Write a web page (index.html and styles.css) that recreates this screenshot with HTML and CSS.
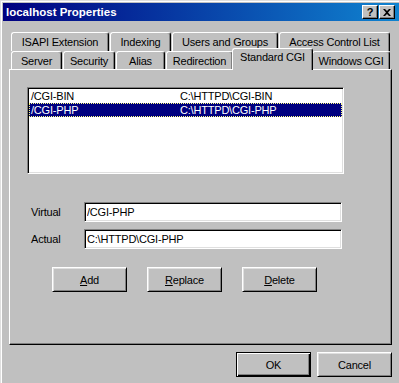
FILE: index.html
```html
<!DOCTYPE html>
<html>
<head>
<meta charset="utf-8">
<link rel="stylesheet" href="styles.css">
</head>
<body>
<div class="window">
  <div class="titlebar">
    <span class="title">localhost Properties</span>
    <div class="title-buttons">
      <span class="tbtn help">?</span>
      <span class="tbtn close"><svg width="8" height="7" viewBox="0 0 8 7"><path d="M0 0h2l2 2 2-2h2L5 3.5 8 7H6L4 5 2 7H0l3-3.5z" fill="#000"/></svg></span>
    </div>
  </div>
  <div class="content">
    <div class="tabs">
      <div class="tabrow back">
        <div class="tab">ISAPI Extension</div>
        <div class="tab">Indexing</div>
        <div class="tab">Users and Groups</div>
        <div class="tab">Access Control List</div>
      </div>
      <div class="tabrow front">
        <div class="tab">Server</div>
        <div class="tab">Security</div>
        <div class="tab">Alias</div>
        <div class="tab">Redirection</div>
        <div class="tab selected">Standard CGI</div>
        <div class="tab">Windows CGI</div>
      </div>
    </div>
    <div class="panel">
      <div class="listbox">
        <div class="row"><span class="cell">/CGI-BIN</span><span class="cell">C:\HTTPD\CGI-BIN</span></div>
        <div class="row selected"><span class="cell">/CGI-PHP</span><span class="cell">C:\HTTPD\CGI-PHP</span></div>
      </div>
      <div class="fields">
        <label class="label" for="virt">Virtual</label>
        <input class="edit" id="virt" type="text" value="/CGI-PHP">
        <label class="label" for="act">Actual</label>
        <input class="edit" id="act" type="text" value="C:\HTTPD\CGI-PHP">
      </div>
      <div class="actions">
        <button class="btn"><u>A</u>dd</button>
        <button class="btn"><u>R</u>eplace</button>
        <button class="btn"><u>D</u>elete</button>
      </div>
    </div>
    <div class="footer">
      <button class="btn default">OK</button>
      <button class="btn">Cancel</button>
    </div>
  </div>
</div>
</body>
</html>
```

FILE: styles.css
```css
html, body {
  margin: 0;
  padding: 0;
}
body {
  width: 399px;
  height: 383px;
  overflow: hidden;
  background: #c0c0c0;
  font-family: "Liberation Sans", Arial, sans-serif;
  font-size: 11px;
  letter-spacing: -0.2px;
  color: #000;
}
.window {
  width: 404px;
  height: 396px;
  box-sizing: border-box;
  border: 1px solid;
  border-color: #dfdfdf #000 #000 #dfdfdf;
  box-shadow: inset 1px 1px #fff, inset -1px -1px #808080;
  padding: 2px;
  background: #c0c0c0;
}
.titlebar {
  height: 18px;
  display: flex;
  align-items: center;
  justify-content: space-between;
  padding-left: 3px;
  background: linear-gradient(to right, #000080, #1084d0);
  color: #fff;
  font-weight: bold;
  font-size: 11.5px;
  letter-spacing: 0;
}
.title-buttons {
  display: flex;
  gap: 1px;
  margin-right: 6px;
}
.tbtn {
  width: 16px;
  height: 14px;
  box-sizing: border-box;
  display: flex;
  align-items: center;
  justify-content: center;
  background: #c0c0c0;
  border: 1px solid;
  border-color: #fff #000 #000 #fff;
  box-shadow: inset -1px -1px #808080;
  color: #000;
  font-weight: bold;
  font-size: 11px;
  line-height: 12px;
}
.content {
  padding: 11px 0 0 6px;
}
.tabs {
  margin-left: 2px;
}
.tabrow {
  display: grid;
  column-gap: 1px;
}
.tabrow.back {
  grid-template-columns: 98px 61px 106px 111px;
  height: 19px;
}
.tabrow.front {
  grid-template-columns: 51px 52px 49px 67px 77px 78px;
  height: 18px;
}
.tab {
  box-sizing: border-box;
  border-top: 1px solid #fff;
  border-left: 1px solid #fff;
  border-right: 1px solid #000;
  border-radius: 3px 3px 0 0;
  box-shadow: inset -1px 0 #808080;
  background: #c0c0c0;
  padding-top: 3px;
  text-align: center;
  line-height: 13px;
  white-space: nowrap;
}
.tab.selected {
  position: relative;
  margin: -3px -2px -1px -2px;
  padding-top: 2px;
}
.panel {
  width: 383px;
  height: 276px;
  box-sizing: border-box;
  border: 1px solid;
  border-color: #fff #000 #000 #fff;
  box-shadow: inset -1px -1px #808080;
  padding: 17px 0 0 17px;
}
.listbox {
  width: 317px;
  height: 87px;
  box-sizing: border-box;
  border: 1px solid;
  border-color: #808080 #fff #fff #808080;
  box-shadow: inset 1px 1px #000, inset -1px -1px #dfdfdf;
  background: #fff;
  padding: 1px;
}
.row {
  display: grid;
  grid-template-columns: 149px 1fr;
  height: 14px;
  line-height: 14px;
}
.cell {
  padding-left: 2px;
  white-space: nowrap;
}
.row.selected {
  background: #000080;
  color: #fff;
  outline: 1px dotted #ffff80;
  outline-offset: -1px;
}
.fields {
  display: grid;
  grid-template-columns: 53px 258px;
  grid-auto-rows: 20px;
  row-gap: 7px;
  align-items: center;
  margin: 28px 0 0 4px;
}
.label {
  line-height: 13px;
}
.edit {
  box-sizing: border-box;
  height: 20px;
  width: 258px;
  margin: 0;
  padding: 0 2px;
  border: 1px solid;
  border-color: #808080 #fff #fff #808080;
  box-shadow: inset 1px 1px #000, inset -1px -1px #dfdfdf;
  background: #fff;
  font-family: "Liberation Sans", Arial, sans-serif;
  font-size: 11px;
  letter-spacing: -0.2px;
  color: #000;
  outline: none;
}
.actions {
  display: flex;
  gap: 20px;
  margin: 18px 0 0 25px;
}
.btn {
  width: 75px;
  height: 25px;
  box-sizing: border-box;
  margin: 0;
  padding: 0;
  border: 1px solid;
  border-color: #fff #000 #000 #fff;
  box-shadow: inset 1px 1px #dfdfdf, inset -1px -1px #808080;
  background: #c0c0c0;
  font-family: "Liberation Sans", Arial, sans-serif;
  font-size: 11px;
  letter-spacing: -0.2px;
  color: #000;
  text-align: center;
}
.btn u {
  text-underline-offset: 1px;
}
.btn.default {
  border-color: #000;
  box-shadow: inset 1px 1px #fff, inset -1px -1px #000, inset -2px -2px #808080;
}
.footer {
  width: 383px;
  display: flex;
  justify-content: flex-end;
  gap: 6px;
  margin-top: 7px;
}
```
